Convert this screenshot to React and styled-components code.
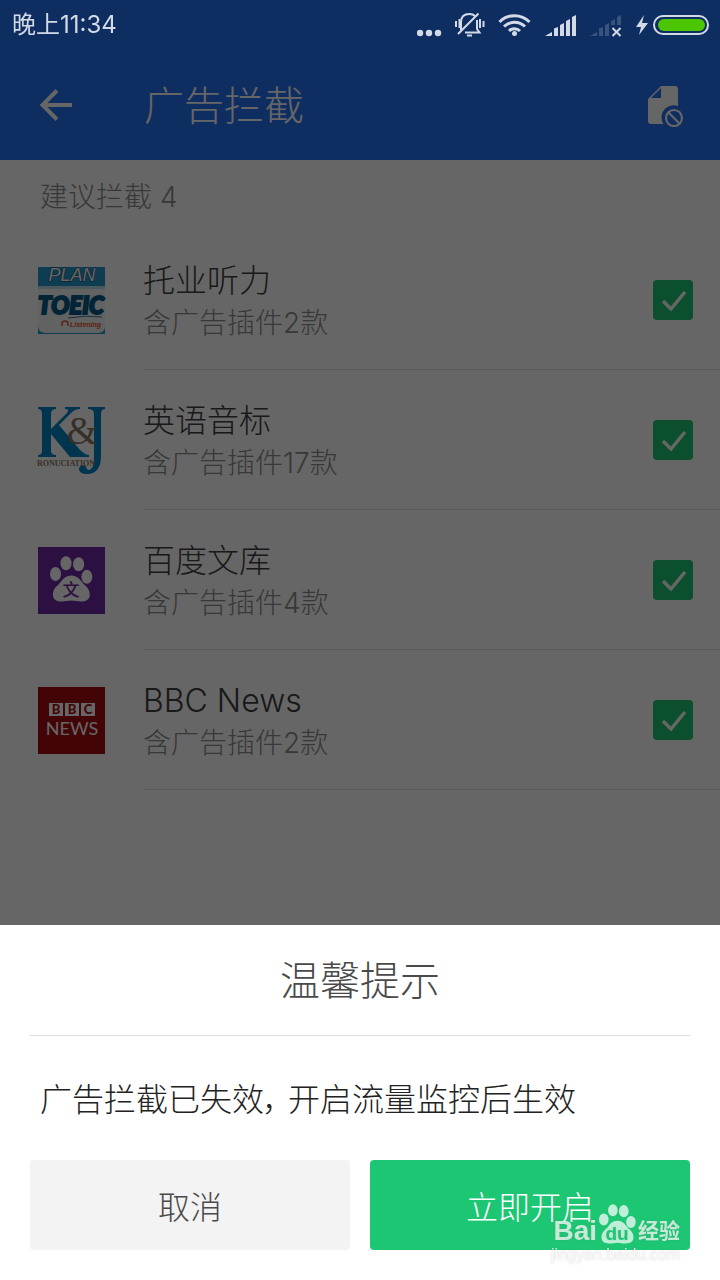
import React, { useState } from 'react';
import styled, { createGlobalStyle } from 'styled-components';

const GlobalStyle = createGlobalStyle`
    * {
        box-sizing: border-box;
    }
    body {
        margin: 0;
        background-color: white;
        font-family: Inter, 'Noto Sans CJK SC', sans-serif;
        font-weight: 300;
    }
    button, input {
        font-family: inherit;
        font-weight: inherit;
        margin: 0;
    }
`;

const StyledPage = styled.div`
    min-height: 100vh;
`;

const StyledHeader = styled.header`
    background-color: #2570f2;
    color: white;
`;

// stays bright above the scrim
const StyledStatusBar = styled.div`
    position: relative;
    z-index: 2;
    height: 50px;
    padding: 0 11px 0 12px;
    display: flex;
    align-items: center;
    justify-content: space-between;
    color: #d3dae6;
    font-size: 24px;
    font-weight: 400;
    line-height: 52px;
`;

const StyledStatusIcons = styled.div`
    display: flex;
    align-items: center;
    & svg {
        display: block;
    }
`;

const StyledTitleBar = styled.div`
    height: 110px;
    padding: 0 32px 0 34px;
    display: flex;
    align-items: center;
`;

const StyledIconButton = styled.button`
    width: 44px;
    height: 44px;
    padding: 0;
    border: none;
    background: none;
    color: inherit;
    cursor: pointer;
    & svg {
        display: block;
    }
`;

const StyledPageTitle = styled.h1`
    flex: 1;
    margin: 0 0 0 66px;
    padding-top: 2px;
    font-size: 40px;
    font-weight: 300;
    line-height: 60px;
`;

const StyledSectionTitle = styled.h2`
    height: 70px;
    margin: 0;
    padding: 0 40px;
    color: #8c8c8c;
    font-size: 28px;
    font-weight: 300;
    line-height: 74px;
`;

const StyledList = styled.ul`
    margin: 0;
    padding: 0;
    list-style: none;
`;

const StyledRow = styled.label`
    height: 140px;
    padding-left: 38px;
    display: flex;
    align-items: center;
    gap: 38px;
    cursor: pointer;
    & > svg {
        display: block;
        flex: none;
    }
`;

const StyledRowBody = styled.div`
    flex: 1;
    height: 100%;
    padding-right: 27px;
    display: flex;
    align-items: center;
    justify-content: space-between;
    border-bottom: 1px solid #e4e4e4;
`;

const StyledAppText = styled.div`
    padding-top: 4px;
    line-height: 42px;
`;

const StyledAppName = styled.div`
    color: #404040;
    font-size: 32px;
`;

const StyledAppInfo = styled.div`
    color: #8c8c8c;
    font-size: 28px;
`;

const StyledCheck = styled.span`
    display: grid;
    width: 40px;
    height: 40px;
    & > * {
        grid-area: 1 / 1;
    }
    & svg {
        pointer-events: none;
        visibility: hidden;
    }
    & input:checked + svg {
        visibility: visible;
    }
`;

const StyledCheckbox = styled.input`
    appearance: none;
    width: 40px;
    height: 40px;
    border: 2px solid #1cc673;
    border-radius: 4px;
    cursor: pointer;
    &:checked {
        background-color: #1cc673;
    }
`;

const StyledScrim = styled.div`
    position: fixed;
    inset: 0;
    z-index: 1;
    display: flex;
    flex-direction: column;
    justify-content: flex-end;
    background-color: rgba(0, 0, 0, 0.6);
`;

const StyledSheet = styled.section`
    padding: 0 30px 30px;
    background-color: white;
`;

const StyledSheetTitle = styled.h2`
    margin: 0;
    padding: 26px 0 24px;
    border-bottom: 1px solid #e0e0e0;
    color: #4a4a4a;
    font-size: 40px;
    font-weight: 300;
    line-height: 60px;
    text-align: center;
`;

const StyledSheetText = styled.p`
    margin: 0;
    padding: 40px 10px 36px;
    color: #222;
    font-size: 32px;
    line-height: 48px;
    & span {
        padding-right: 8px;
        font-feature-settings: 'palt';
    }
`;

const StyledActions = styled.div`
    display: flex;
    gap: 20px;
`;

const StyledButton = styled.button`
    flex: 1;
    height: 90px;
    padding: 0;
    border: none;
    border-radius: 4px;
    background-color: ${props => (props.$primary ? '#1cc673' : '#f3f3f3')};
    color: ${props => (props.$primary ? 'white' : '#4a4a4a')};
    font-size: 32px;
    cursor: pointer;
`;

const StyledWatermark = styled.div`
    position: fixed;
    right: 40px;
    bottom: 15px;
    z-index: 3;
    pointer-events: none;
`;

const StyledWatermarkLogo = styled.div`
    display: flex;
    align-items: flex-end;
    justify-content: flex-end;
    gap: 2px;
    color: rgba(255, 255, 255, 0.72);
    text-shadow: 0 0 2px rgba(120, 120, 120, 0.3);
    font-family: 'Liberation Sans', 'Noto Sans CJK SC', sans-serif;
    font-size: 28px;
    font-weight: 700;
    line-height: 28px;
    & svg {
        display: block;
    }
    & span:last-child {
        font-size: 21px;
        line-height: 28px;
    }
`;

const StyledWatermarkUrl = styled.div`
    color: rgba(255, 255, 255, 0.8);
    text-shadow: 0 0 2px rgba(90, 90, 90, 0.3);
    font-family: 'Liberation Sans', sans-serif;
    font-size: 16px;
    font-weight: 400;
    line-height: 20px;
`;

const StatusIcons = () => (
    <svg width='292' height='30' viewBox='417 10 292 30' fill='currentColor'>
        <circle cx='420' cy='33' r='3.2' />
        <circle cx='429' cy='33' r='3.2' />
        <circle cx='438' cy='33' r='3.2' />
        <g fill='none' stroke='currentColor' strokeWidth='2'>
            <path d='M461 30V22c0-5 3-8 8.500-8c2 0 4 .5 5.500 2M477 20v9l2.500 3.500H465M458 34L478.500 13.500' />
            <path d='M456 21v6M459.500 19v9M480 19v9M483.500 21v6M467 35.500h5' />
        </g>
        <g fill='none' stroke='currentColor' strokeWidth='3'>
            <path d='M499.500 22a21 21 0 0 1 30 0' />
            <path d='M504 26.500a15 15 0 0 1 21 0' />
            <path d='M509 31a8 8 0 0 1 11 0' />
        </g>
        <circle cx='514.500' cy='33.500' r='2.500' />
        <path d='M545 36l7-4v4zM554 28.500l4-1.500v9h-4zM560 25l4-2v13h-4zM566 21l4-2v17h-4zM572 17l4-2v21h-4z' />
        <path
            opacity='.22'
            d='M590 36l7-4v4zM599 28.500l4-1.500v9h-4zM605 25l4-2v13h-4zM611 21l4-2v6h-4zM617 17l4-2v10h-4z'
        />
        <path
            d='M612.500 28l8 8M620.500 28l-8 8'
            fill='none'
            stroke='currentColor'
            strokeWidth='2'
        />
        <path d='M644 15l-8 12h5l-2 8 9-12h-6z' />
        <rect
            x='654'
            y='16'
            width='54'
            height='18'
            rx='9'
            fill='none'
            stroke='currentColor'
            strokeWidth='2'
        />
        <rect x='658' y='19' width='47' height='12' rx='6' fill='#4cc600' />
    </svg>
);

const BackIcon = () => (
    <svg width='44' height='44' viewBox='0 0 44 44' fill='none'>
        <path
            d='M38 22H8M23 7.500L8.500 22L23 36.500'
            stroke='currentColor'
            strokeWidth='4'
        />
    </svg>
);

const BlockListIcon = () => (
    <svg width='44' height='44' viewBox='0 0 44 44'>
        <path
            d='M17 3h14a3 3 0 0 1 3 3v17.200A12 12 0 0 0 19.500 41H7a3 3 0 0 1-3-3V16z'
            fill='currentColor'
        />
        <path d='M7 15h10V5z' fill='#2570f2' />
        <g fill='none' stroke='currentColor' strokeWidth='2.200'>
            <circle cx='30' cy='35' r='8' />
            <path d='M24.500 29.500l11 11' />
        </g>
    </svg>
);

const Paw = ({ x, y, scale, color }) => (
    <g transform={`translate(${x} ${y}) scale(${scale})`} fill={color}>
        <ellipse cx='5.700' cy='18.500' rx='5.700' ry='7.200' />
        <ellipse cx='16.500' cy='7.500' rx='5.700' ry='7.200' />
        <ellipse cx='29.500' cy='8.500' rx='5.700' ry='7.200' />
        <ellipse cx='38' cy='21.500' rx='5.700' ry='7.200' />
        <path d='M22 20c6 0 9 4 12 8c4 4 7 6 7 12c0 5-4 7-9 7c-4 0-7-1-10-1s-6 1-10 1c-5 0-9-2-9-7c0-6 3-8 7-12c3-4 6-8 12-8z' />
    </g>
);

const ToeicIcon = () => (
    <svg width='67' height='67' viewBox='0 0 67 67' overflow='visible'>
        <rect width='67' height='67' fill='#2496c8' />
        <path d='M0 19h67v40q0 6-6 7H7q-7-1-7-7z' fill='#f2f4f4' />
        <path d='M0 19h67v3H0z' fill='#b9dfe8' />
        <text
            x='34'
            y='14'
            fill='white'
            stroke='#1b4058'
            strokeWidth='1'
            paintOrder='stroke'
            fontFamily='Liberation Sans'
            fontSize='18'
            fontStyle='italic'
            textAnchor='middle'
        >
            PLAN
        </text>
        <text
            x='33'
            y='47'
            fill='#075a88'
            stroke='#075a88'
            strokeWidth='2'
            fontFamily='Lato'
            fontSize='24'
            fontWeight='900'
            fontStyle='italic'
            textAnchor='middle'
        >
            TOEIC
        </text>
        <path d='M30 51q18-3 34-1' fill='none' stroke='#48769e' />
        <path
            d='M24 59v-2a3 3 0 0 1 6 0v2'
            fill='none'
            stroke='#e8552a'
            strokeWidth='1.500'
        />
        <text
            x='32'
            y='60'
            fill='#e8552a'
            fontFamily='Liberation Sans'
            fontSize='7'
            fontWeight='700'
            fontStyle='italic'
        >
            Listening
        </text>
    </svg>
);

const PhoneticIcon = () => (
    <svg width='67' height='67' viewBox='0 0 67 67' overflow='visible'>
        <g fill='#0084c8'>
            <path d='M0 0h18v2q-5 0-5 5v15L29 6q3-4-2-4V0h15v2q-5 0-9 4L21 18l21 25q5 5 9 5v2H32L13 27v17q0 4 5 4v2H0v-2q4 0 4-4V7q0-5-4-5z' />
            <path d='M50 0h17v2q-4 0-4 5v42c0 12-5 18-14 18c-5 0-8-2-8-5c0-4 5-5 7-2c1 2 1 3 3 3q5-1 5-12V7q0-5-6-5z' />
        </g>
        <text
            x='44'
            y='37'
            fill='#8c7864'
            fontFamily='Liberation Serif'
            fontSize='40'
            fontWeight='400'
            textAnchor='middle'
        >
            &amp;
        </text>
        <text
            x='28'
            y='59'
            fill='#8c7864'
            fontFamily='Liberation Serif'
            fontSize='8'
            fontWeight='700'
            textAnchor='middle'
        >
            RONUCIATION
        </text>
    </svg>
);

const WenkuIcon = () => (
    <svg width='67' height='67' viewBox='0 0 67 67'>
        <rect width='67' height='67' fill='#6c2aa4' />
        <Paw x='12' y='9' scale='.97' color='white' />
        <text
            x='33'
            y='49'
            fill='#6c2aa4'
            fontFamily='Noto Sans CJK SC'
            fontSize='17'
            fontWeight='500'
            textAnchor='middle'
        >
            文
        </text>
    </svg>
);

const BbcIcon = () => (
    <svg width='67' height='67' viewBox='0 0 67 67'>
        <rect width='67' height='67' fill='#a80c14' />
        <path d='M11 16h14v13H11zM27 16h14v13H27zM43 16h14v13H43z' fill='white' />
        <g fontFamily='Lato' textAnchor='middle'>
            <g fill='#a80c14' fontSize='13' fontWeight='900'>
                <text x='18' y='27'>B</text>
                <text x='34' y='27'>B</text>
                <text x='50' y='27'>C</text>
            </g>
            <text x='34' y='48' fill='white' fontSize='18' fontWeight='400'>
                NEWS
            </text>
        </g>
    </svg>
);

const apps = [
    { id: 'toeic', name: '托业听力', count: 2, Icon: ToeicIcon },
    { id: 'phonetic', name: '英语音标', count: 17, Icon: PhoneticIcon },
    { id: 'wenku', name: '百度文库', count: 4, Icon: WenkuIcon },
    { id: 'bbc', name: 'BBC News', count: 2, Icon: BbcIcon }
];

function AppRow({ app, checked, onToggle }) {
    const { id, name, count, Icon } = app;
    return (
        <StyledRow htmlFor={id}>
            <Icon />
            <StyledRowBody>
                <StyledAppText>
                    <StyledAppName>{name}</StyledAppName>
                    <StyledAppInfo>含广告插件{count}款</StyledAppInfo>
                </StyledAppText>
                <StyledCheck>
                    <StyledCheckbox
                        type='checkbox'
                        id={id}
                        checked={checked}
                        onChange={() => onToggle(id)}
                    />
                    <svg width='40' height='40' viewBox='0 0 40 40' fill='none'>
                        <path
                            d='M10 21L18 29L32 12'
                            stroke='white'
                            strokeWidth='3.500'
                        />
                    </svg>
                </StyledCheck>
            </StyledRowBody>
        </StyledRow>
    );
}

export default function App() {
    const [checked, setChecked] = useState(apps.map(app => app.id));
    const [sheetOpen, setSheetOpen] = useState(true);

    const handleToggle = id =>
        setChecked(
            checked.includes(id)
                ? checked.filter(item => item !== id)
                : [...checked, id]
        );

    return (
        <StyledPage>
            <GlobalStyle />
            <StyledHeader>
                <StyledStatusBar>
                    <span>晚上11:34</span>
                    <StyledStatusIcons>
                        <StatusIcons />
                    </StyledStatusIcons>
                </StyledStatusBar>
                <StyledTitleBar>
                    <StyledIconButton aria-label='返回'>
                        <BackIcon />
                    </StyledIconButton>
                    <StyledPageTitle>广告拦截</StyledPageTitle>
                    <StyledIconButton aria-label='拦截记录'>
                        <BlockListIcon />
                    </StyledIconButton>
                </StyledTitleBar>
            </StyledHeader>
            <main>
                <StyledSectionTitle>建议拦截 {apps.length}</StyledSectionTitle>
                <StyledList>
                    {apps.map(app => (
                        <li key={app.id}>
                            <AppRow
                                app={app}
                                checked={checked.includes(app.id)}
                                onToggle={handleToggle}
                            />
                        </li>
                    ))}
                </StyledList>
            </main>
            {sheetOpen && (
                <StyledScrim>
                    <StyledSheet role='dialog' aria-labelledby='sheet-title'>
                        <StyledSheetTitle id='sheet-title'>
                            温馨提示
                        </StyledSheetTitle>
                        <StyledSheetText>
                            广告拦截已失效<span>，</span>开启流量监控后生效
                        </StyledSheetText>
                        <StyledActions>
                            <StyledButton onClick={() => setSheetOpen(false)}>
                                取消
                            </StyledButton>
                            <StyledButton
                                $primary
                                onClick={() => setSheetOpen(false)}
                            >
                                立即开启
                            </StyledButton>
                        </StyledActions>
                    </StyledSheet>
                </StyledScrim>
            )}
            <StyledWatermark>
                <StyledWatermarkLogo>
                    <span>Bai</span>
                    <svg width='37' height='42' viewBox='0 0 37 42'>
                        <Paw
                            x='0'
                            y='1'
                            scale='.84'
                            color='rgba(255, 255, 255, 0.72)'
                        />
                        <text
                            x='18'
                            y='37'
                            fill='#1cc673'
                            fontSize='19'
                            textAnchor='middle'
                        >
                            du
                        </text>
                    </svg>
                    <span>经验</span>
                </StyledWatermarkLogo>
                <StyledWatermarkUrl>jingyan.baidu.com</StyledWatermarkUrl>
            </StyledWatermark>
        </StyledPage>
    );
}
